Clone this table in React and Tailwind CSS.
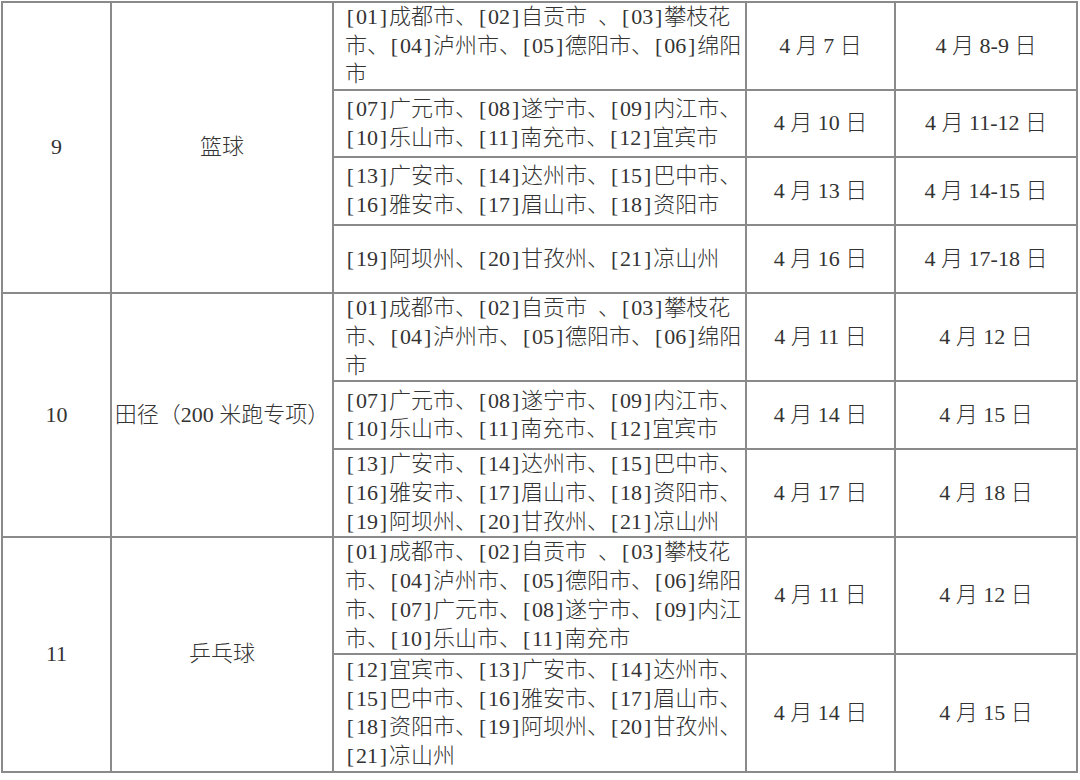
import React from "react";

const groups = [
  {
    no: "9",
    sport: "篮球",
    rows: [
      {
        h: "h-[88px]",
        lines: ["[01]成都市、[02]自贡市 、[03]攀枝花", "市、[04]泸州市、[05]德阳市、[06]绵阳", "市"],
        start: "4 月 7 日",
        end: "4 月 8-9 日",
      },
      {
        h: "h-[67px]",
        lines: ["[07]广元市、[08]遂宁市、[09]内江市、", "[10]乐山市、[11]南充市、[12]宜宾市"],
        start: "4 月 10 日",
        end: "4 月 11-12 日",
      },
      {
        h: "h-[68px]",
        lines: ["[13]广安市、[14]达州市、[15]巴中市、", "[16]雅安市、[17]眉山市、[18]资阳市"],
        start: "4 月 13 日",
        end: "4 月 14-15 日",
      },
      {
        h: "h-[68px]",
        lines: ["[19]阿坝州、[20]甘孜州、[21]凉山州"],
        start: "4 月 16 日",
        end: "4 月 17-18 日",
      },
    ],
  },
  {
    no: "10",
    sport: "田径（200 米跑专项）",
    rows: [
      {
        h: "h-[88px]",
        lines: ["[01]成都市、[02]自贡市 、[03]攀枝花", "市、[04]泸州市、[05]德阳市、[06]绵阳", "市"],
        start: "4 月 11 日",
        end: "4 月 12 日",
      },
      {
        h: "h-[68px]",
        lines: ["[07]广元市、[08]遂宁市、[09]内江市、", "[10]乐山市、[11]南充市、[12]宜宾市"],
        start: "4 月 14 日",
        end: "4 月 15 日",
      },
      {
        h: "h-[86px]",
        lines: [
          "[13]广安市、[14]达州市、[15]巴中市、",
          "[16]雅安市、[17]眉山市、[18]资阳市、",
          "[19]阿坝州、[20]甘孜州、[21]凉山州",
        ],
        start: "4 月 17 日",
        end: "4 月 18 日",
      },
    ],
  },
  {
    no: "11",
    sport: "乒乓球",
    rows: [
      {
        h: "h-[117px]",
        lines: [
          "[01]成都市、[02]自贡市 、[03]攀枝花",
          "市、[04]泸州市、[05]德阳市、[06]绵阳",
          "市、[07]广元市、[08]遂宁市、[09]内江",
          "市、[10]乐山市、[11]南充市",
        ],
        start: "4 月 11 日",
        end: "4 月 12 日",
      },
      {
        h: "h-[118px]",
        lines: [
          "[12]宜宾市、[13]广安市、[14]达州市、",
          "[15]巴中市、[16]雅安市、[17]眉山市、",
          "[18]资阳市、[19]阿坝州、[20]甘孜州、",
          "[21]凉山州",
        ],
        start: "4 月 14 日",
        end: "4 月 15 日",
      },
    ],
  },
];

// brackets and spaces padded out to a half-width box, as in the song-style source font
function Txt({ s }) {
  return s.split(/([\[\] ])/).map((t, i) => {
    if (t === "[" || t === "]") {
      return (
        <span key={i} className="px-[1.85px]">
          {t}
        </span>
      );
    }
    if (t === " ") {
      return (
        <span key={i} className="pr-[5.5px]">
          {"\u00a0"}
        </span>
      );
    }
    return t;
  });
}

const cell = "border-2 border-[#8a8a8a] p-0 align-middle";

export default function App() {
  return (
    <div className="w-[1080px] h-[780px] bg-white overflow-hidden">
      <table className="mt-px ml-px w-[1077px] table-fixed border-collapse text-[22px] leading-[28.7px] font-light text-[#333] font-['Liberation_Serif','Noto_Sans_CJK_SC',serif]">
        <colgroup>
          <col className="w-[109px]" />
          <col className="w-[222px]" />
          <col className="w-[413px]" />
          <col className="w-[149px]" />
          <col className="w-[182px]" />
        </colgroup>
        <tbody>
          {groups.map((g) =>
            g.rows.map((r, i) => (
              <tr key={g.no + "-" + i} className={r.h}>
                {i === 0 && (
                  <td rowSpan={g.rows.length} className={cell + " text-center"}>
                    {g.no}
                  </td>
                )}
                {i === 0 && (
                  <td rowSpan={g.rows.length} className={cell + " text-center whitespace-nowrap"}>
                    {g.sport}
                  </td>
                )}
                <td className={cell + " pl-[11px] pr-[3px] whitespace-nowrap"}>
                  {r.lines.map((l, j) => (
                    <div key={j}>
                      <Txt s={l} />
                    </div>
                  ))}
                </td>
                <td className={cell + " text-center whitespace-nowrap"}>{r.start}</td>
                <td className={cell + " text-center whitespace-nowrap"}>{r.end}</td>
              </tr>
            ))
          )}
        </tbody>
      </table>
    </div>
  );
}
